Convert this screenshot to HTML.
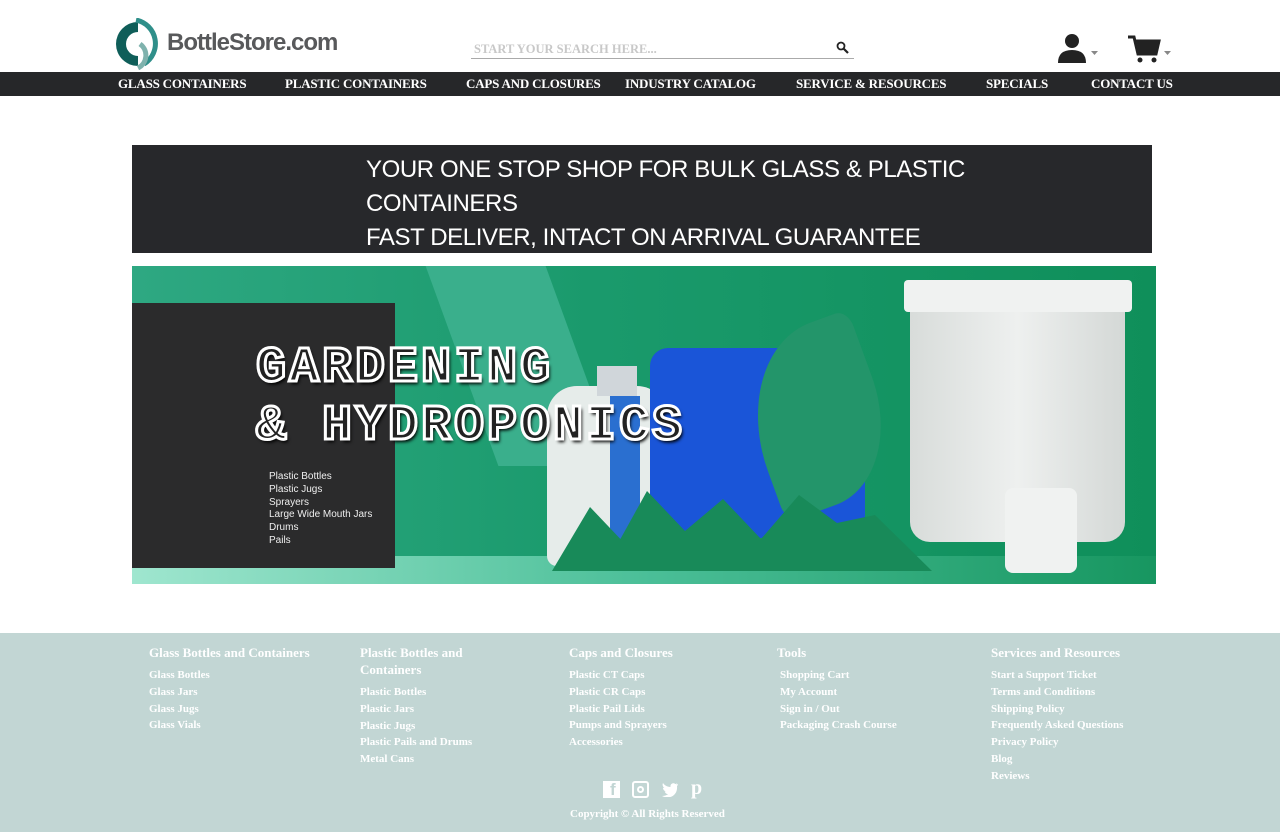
<!DOCTYPE html>
<html><head><meta charset="utf-8"><style>
*{margin:0;padding:0;box-sizing:border-box}
body{width:1280px;height:832px;background:#fff;font-family:"Liberation Serif",serif;position:relative;overflow:hidden}
.abs{position:absolute}
.nav{position:absolute;top:72px;left:0;width:1280px;height:24px;background:#262729}
.nav span{position:absolute;top:4px;color:#fff;font:bold 13px "Liberation Serif",serif;letter-spacing:-0.2px}
.ft{position:absolute;top:633px;left:0;width:1280px;height:199px;background:#c2d6d4;color:#fff}
.col{position:absolute;top:11px}
.col h4{font:bold 13px/17px "Liberation Serif",serif;color:#fff;margin-bottom:6px}
.col div{font:bold 11px/16.8px "Liberation Serif",serif}
</style></head><body>
<svg class="abs" style="left:114px;top:18px" width="48" height="52" viewBox="0 0 48 52">
<path d="M24 4 A22 22 0 1 0 24 48 L24 38 A12 12 0 1 1 24 14 Z" fill="#0f5e59"/>
<path d="M22 2 A24 24 0 0 1 30 46" stroke="#2f8f8a" stroke-width="5" fill="none"/>
<path d="M26 26 A14 14 0 0 1 24 50" stroke="#7fb2ad" stroke-width="5" fill="none"/>
</svg>
<div class="abs" style="left:167px;top:29px;font:bold 24px 'Liberation Sans',sans-serif;color:#58595b;letter-spacing:-1px">BottleStore.com</div>
<div class="abs" style="left:471px;top:41px;width:383px;height:18px;border-bottom:1.5px solid #aaa;font:bold 12.5px 'Liberation Serif',serif;color:#c8c8c8;padding-left:3px;padding-top:1px">START YOUR SEARCH HERE...</div>
<svg class="abs" style="left:836px;top:41px" width="13" height="13" viewBox="0 0 13 13"><circle cx="5" cy="5" r="3.5" stroke="#222" stroke-width="1.8" fill="none"/><path d="M7.5 7.5L12 12" stroke="#222" stroke-width="2.2"/></svg>
<svg class="abs" style="left:1057px;top:33px" width="45" height="30" viewBox="0 0 45 30"><circle cx="15" cy="8" r="7" fill="#222"/><path d="M1 30 Q1 17 15 17 Q29 17 29 30Z" fill="#222"/><path d="M34 18h7l-3.5 4z" fill="#888"/></svg>
<svg class="abs" style="left:1127px;top:34px" width="48" height="30" viewBox="0 0 48 30"><path d="M1 3h6l4 17h18l3-13H9" stroke="#222" stroke-width="3" fill="none"/><path d="M9 6h23l-3 13H12z" fill="#222"/><circle cx="13" cy="26" r="2.5" fill="#222"/><circle cx="27" cy="26" r="2.5" fill="#222"/><path d="M37 17h7l-3.5 4z" fill="#888"/></svg>
<div class="nav">
<span style="left:118px">GLASS CONTAINERS</span>
<span style="left:285px">PLASTIC CONTAINERS</span>
<span style="left:466px">CAPS AND CLOSURES</span>
<span style="left:625px">INDUSTRY CATALOG</span>
<span style="left:796px">SERVICE &amp; RESOURCES</span>
<span style="left:986px">SPECIALS</span>
<span style="left:1091px">CONTACT US</span>
</div>
<div class="abs" style="left:132px;top:145px;width:1020px;height:108px;background:#27282b"></div>
<div class="abs" style="left:366px;top:153px;width:660px;color:#fff;font:24px/34px 'Liberation Sans',sans-serif;letter-spacing:-0.4px">YOUR ONE STOP SHOP FOR BULK GLASS &amp; PLASTIC CONTAINERS<br>FAST DELIVER, INTACT ON ARRIVAL GUARANTEE</div>
<div class="abs" style="left:132px;top:266px;width:1024px;height:318px;overflow:hidden;background:linear-gradient(90deg,#2ea882 0%,#1a9a6c 45%,#0f8f5a 100%)">
<div class="abs" style="left:0;top:290px;width:1024px;height:28px;background:linear-gradient(90deg,#9fe6cf,#4bbf98 50%,#179660)"></div>
<div class="abs" style="left:330px;top:0;width:120px;height:200px;background:#3aaf8c;transform:skewX(20deg)"></div>
<div class="abs" style="left:415px;top:120px;width:120px;height:180px;background:#e6ecea;border-radius:30px 30px 10px 10px"></div>
<div class="abs" style="left:465px;top:100px;width:40px;height:30px;background:#d0d6da"></div>
<div class="abs" style="left:478px;top:130px;width:30px;height:170px;background:#2a6fd0"></div>
<div class="abs" style="left:518px;top:82px;width:215px;height:190px;background:#1a55d8;border-radius:18px"></div>
<div class="abs" style="left:620px;top:60px;width:130px;height:180px;background:#23956a;border-radius:70% 10% 60% 10%;transform:rotate(-20deg)"></div>
<div class="abs" style="left:778px;top:14px;width:215px;height:262px;background:linear-gradient(90deg,#d8dcda,#eef0ef 50%,#d4d8d6);border-radius:4px 4px 20px 20px"></div>
<div class="abs" style="left:772px;top:14px;width:228px;height:32px;background:#f0f2f1;border-radius:4px"></div>
<div class="abs" style="left:873px;top:222px;width:72px;height:85px;background:#f0f2f1;border-radius:8px"></div>
<div class="abs" style="left:420px;top:225px;width:380px;height:80px;background:#188a59;clip-path:polygon(0 100%,10% 20%,18% 60%,25% 0,35% 50%,45% 10%,55% 60%,65% 5%,75% 40%,85% 30%,100% 100%)"></div>
<div class="abs" style="left:0;top:37px;width:263px;height:265px;background:#2b2b2c"></div>
<div class="abs" style="left:124px;top:74px;font:bold 50px/58px 'Liberation Mono',monospace;color:#222;-webkit-text-stroke:3px #fff;letter-spacing:3px;text-shadow:2px 3px 3px #000">GARDENING<br>&amp; HYDROPONICS</div>
<div class="abs" style="left:137px;top:205px;color:#eee;font:10px/12.8px 'Liberation Sans',sans-serif">Plastic Bottles<br>Plastic Jugs<br>Sprayers<br>Large Wide Mouth Jars<br>Drums<br>Pails</div>
</div>
<div class="ft">
<div class="col" style="left:149px"><h4>Glass Bottles and Containers</h4><div>Glass Bottles<br>Glass Jars<br>Glass Jugs<br>Glass Vials</div></div>
<div class="col" style="left:360px;width:150px"><h4>Plastic Bottles and Containers</h4><div>Plastic Bottles<br>Plastic Jars<br>Plastic Jugs<br>Plastic Pails and Drums<br>Metal Cans</div></div>
<div class="col" style="left:569px"><h4>Caps and Closures</h4><div>Plastic CT Caps<br>Plastic CR Caps<br>Plastic Pail Lids<br>Pumps and Sprayers<br>Accessories</div></div>
<div class="col" style="left:777px"><h4>Tools</h4><div style="padding-left:3px">Shopping Cart<br>My Account<br>Sign in / Out<br>Packaging Crash Course</div></div>
<div class="col" style="left:991px"><h4>Services and Resources</h4><div>Start a Support Ticket<br>Terms and Conditions<br>Shipping Policy<br>Frequently Asked Questions<br>Privacy Policy<br>Blog<br>Reviews</div></div>
<div class="abs" style="left:603px;top:148px;width:17px;height:17px;background:#fff"><span style="position:absolute;left:7px;top:-1px;font:bold 17px 'Liberation Sans';color:#c2d6d4">f</span></div>
<div class="abs" style="left:632px;top:148px;width:17px;height:17px;border:2px solid #fff;border-radius:3px"><div style="position:absolute;left:3px;top:3px;width:7px;height:7px;border:2px solid #fff;border-radius:50%"></div></div>
<svg class="abs" style="left:661px;top:149px" width="18" height="15" viewBox="0 0 18 15"><path d="M17 2c-1 .5-2 .7-2 .7 1-.7 1.3-1.5 1.3-1.5-1 .6-2 .8-2 .8C12.5.3 9 1.5 9.5 5 6 5 3.3 3 2 1c-1 2 0 4 1.3 5-.6 0-1.3-.3-1.3-.3 0 2 1.5 3.3 3 3.7-.6.2-1.3.2-1.3.2.5 1.5 2 2.5 3.5 2.5C5 13.5 3 14 1 14c8 4 16-1 15-10 1-.7 1-2 1-2z" fill="#fff"/></svg>
<div class="abs" style="left:691px;top:144px;font:bold 20px 'Liberation Serif',serif;color:#fff">p</div>
<div class="abs" style="left:570px;top:175px;font:bold 11px 'Liberation Serif',serif">Copyright © All Rights Reserved</div>
</div>
</body></html>
